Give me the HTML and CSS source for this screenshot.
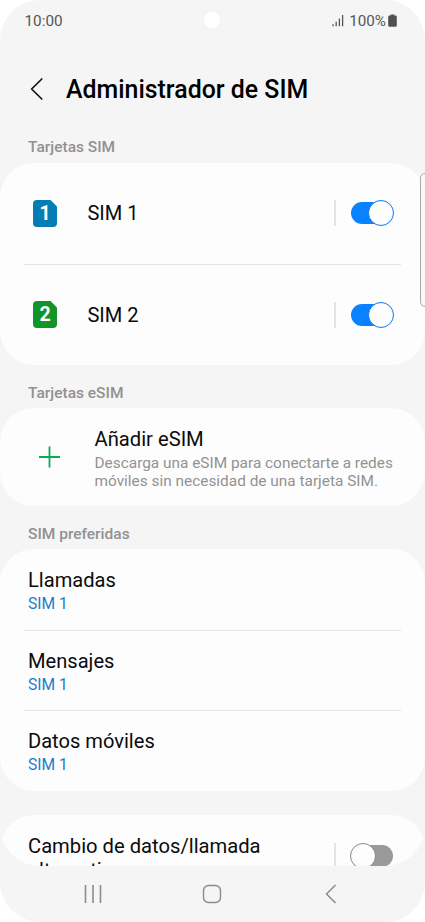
FILE: index.html
```html
<!DOCTYPE html>
<html lang="es">
<head>
<meta charset="utf-8">
<title>Administrador de SIM</title>
<link rel="stylesheet" href="styles.css">
</head>
<body>
<div class="phone">
  <header class="status">
    <span class="time">10:00</span>
    <span class="camera"></span>
    <span class="indicators">
      <svg class="signal" width="12" height="13" viewBox="0 0 12 13"><path d="M1 10.2v2M4.2 7.7v4.5M7.4 4.4v7.8M10.6 1v11.2" stroke="#555" stroke-width="1.3" fill="none"/></svg>
      <span class="percent">100%</span>
      <svg class="battery" width="9" height="13" viewBox="0 0 9 13"><path d="M2.6 0.4h3.8v1.2h1.1q1.3 0 1.3 1.3v8.3q0 1.5-1.5 1.5H1.7q-1.5 0-1.5-1.5V2.9q0-1.3 1.3-1.3h1.1z" fill="#505050"/></svg>
    </span>
  </header>
  <div class="titlebar">
    <svg class="back" width="14" height="24" viewBox="0 0 14 24"><path d="M11.8 2L1.6 12l10.2 10" fill="none" stroke="#111" stroke-width="1.7" stroke-linecap="round" stroke-linejoin="round"/></svg>
    <h1>Administrador de SIM</h1>
  </div>
  <main>
    <h2 class="first">Tarjetas SIM</h2>
    <section class="card sims">
      <div class="sim">
        <svg class="chip" width="24" height="27" viewBox="0 0 24 27"><path d="M4 0h13.5L24 6.5V23q0 4-4 4H4q-4 0-4-4V4q0-4 4-4z" fill="#057cb4"/><text x="12" y="20.2" text-anchor="middle" class="digit">1</text></svg>
        <span class="name">SIM 1</span>
        <span class="switch on"><i></i></span>
      </div>
      <div class="sim">
        <svg class="chip" width="24" height="27" viewBox="0 0 24 27"><path d="M4 0h13.5L24 6.5V23q0 4-4 4H4q-4 0-4-4V4q0-4 4-4z" fill="#129428"/><text x="12" y="20.2" text-anchor="middle" class="digit">2</text></svg>
        <span class="name">SIM 2</span>
        <span class="switch on"><i></i></span>
      </div>
    </section>
    <h2>Tarjetas eSIM</h2>
    <section class="card esim">
      <svg class="plus" width="22" height="22" viewBox="0 0 22 22"><path d="M10.5 .5v21M0 11h21" stroke="#0eaa58" stroke-width="1.8"/></svg>
      <div>
        <div class="label">Añadir eSIM</div>
        <p>Descarga una eSIM para conectarte a redes<br>móviles sin necesidad de una tarjeta SIM.</p>
      </div>
    </section>
    <h2>SIM preferidas</h2>
    <section class="card prefs">
      <div class="pref"><div class="label">Llamadas</div><div class="value">SIM 1</div></div>
      <div class="pref"><div class="label">Mensajes</div><div class="value">SIM 1</div></div>
      <div class="pref"><div class="label">Datos móviles</div><div class="value">SIM 1</div></div>
    </section>
    <section class="card change">
      <div class="label">Cambio de datos/llamada<br>alternativa</div>
      <span class="switch off"><i></i></span>
    </section>
  </main>
  <nav>
    <svg width="18" height="18" viewBox="0 0 18 18"><path d="M1.5 0v18M9 0v18M16.5 0v18" stroke="#8b8b8b" stroke-width="1.6"/></svg>
    <svg class="home" width="20" height="20" viewBox="0 0 20 20"><rect x="1.5" y="1.5" width="17" height="17" rx="5" fill="none" stroke="#8b8b8b" stroke-width="1.4"/></svg>
    <svg width="12" height="20" viewBox="0 0 12 20"><path d="M10.5 1L1.5 10l9 9" fill="none" stroke="#8b8b8b" stroke-width="1.5"/></svg>
  </nav>
  <span class="edge"></span>
</div>
</body>
</html>
```
FILE: styles.css
```css
* { box-sizing: border-box; }
body { margin: 0; background: #fff; font-family: Roboto, sans-serif; }
.phone {
  position: relative;
  width: 425px;
  height: 922px;
  display: flex;
  flex-direction: column;
  overflow: hidden;
  background: #f5f5f5;
  border-radius: 40px;
  color: #0b0b0b;
}
.status {
  height: 42px;
  display: grid;
  grid-template-columns: 179.5px 16px 1fr;
  align-items: center;
  padding: 0 28px 0 24.5px;
  font-size: 15.3px;
  color: #555;
}
.camera { width: 16px; height: 16px; border-radius: 50%; background: #fff; margin-top: -2px; }
.indicators { display: flex; align-items: center; justify-content: flex-end; }
.signal { margin-top: -1px; }
.percent { margin: 0 2px 0 5px; font-size: 15.2px; }
.battery { margin-top: -1px; }
.titlebar { height: 95px; display: flex; align-items: center; padding-left: 30px; }
.back { margin-top: -2px; }
h1 { margin: 0 0 0 22px; font-size: 24.9px; line-height: 30px; font-weight: 500; color: #000; }
main { height: 728.5px; overflow: hidden; border-radius: 0 0 40px 40px; }
h2 {
  margin: 0;
  height: 43px;
  padding: 17.5px 28px 0;
  font-size: 15.5px;
  line-height: 20px;
  font-weight: 500;
  color: #919191;
}
h2.first { height: 26px; padding-top: 0; }
.card { background: #fdfdfd; border-radius: 34px; }
.sims { height: 202px; }
.sim { height: 101px; display: flex; align-items: center; padding: 0 32px 1px 33px; }
.sim + .sim { padding-bottom: 0; }
.sim + .sim, .pref + .pref {
  background: linear-gradient(#e4e4e4, #e4e4e4) 24px 0 / calc(100% - 48px) 1px no-repeat;
}
.digit { font-size: 19.5px; font-weight: 700; fill: #fff; }
.name { margin-left: 30.4px; font-size: 20.1px; }
.label { font-size: 20.2px; line-height: 23px; }
.switch {
  margin-left: auto;
  width: 59px;
  height: 26px;
  display: flex;
  align-items: center;
  border-left: 2px solid #e4e4e4;
  padding-left: 14.5px;
}
.switch::before { content: ""; width: 42px; height: 22px; border-radius: 11px; background: #0a82ff; flex: none; }
.switch i { width: 26px; height: 26px; flex: none; border: 1px solid #0a78ec; border-radius: 50%; background: #fdfdfd; margin-left: -25px; }
.switch.off::before { background: #999; }
.switch.off i { margin-left: -43px; border-color: #888; }
.esim { height: 98px; display: flex; padding: 20px 0 0 39px; }
.plus { margin-top: 18px; margin-right: 33.5px; }
.esim p { margin: 3px 0 0; font-size: 15.4px; line-height: 18px; color: #929292; }
.prefs { height: 242px; }
.pref { height: 80.7px; padding: 20px 28px 0; }
.pref .label { font-size: 20.1px; }
.value { margin-top: 3px; font-size: 15.6px; line-height: 19px; color: #1a7bd0; }
.change { height: 100px; margin-top: 24px; display: flex; padding: 19px 32px 0 28px; }
.change .label { line-height: 24px; white-space: nowrap; }
.change .switch { margin-top: 9px; }
nav {
  height: 56px;
  display: flex;
  align-items: center;
  justify-content: space-between;
  padding: 0 88px 0 84px;
}
.home { margin-right: 4px; }
.edge {
  position: absolute;
  left: 420px;
  top: 173px;
  width: 10px;
  height: 134px;
  border: 1px solid #aaa;
  border-radius: 5px;
  background: #f8f8f8;
}
```
